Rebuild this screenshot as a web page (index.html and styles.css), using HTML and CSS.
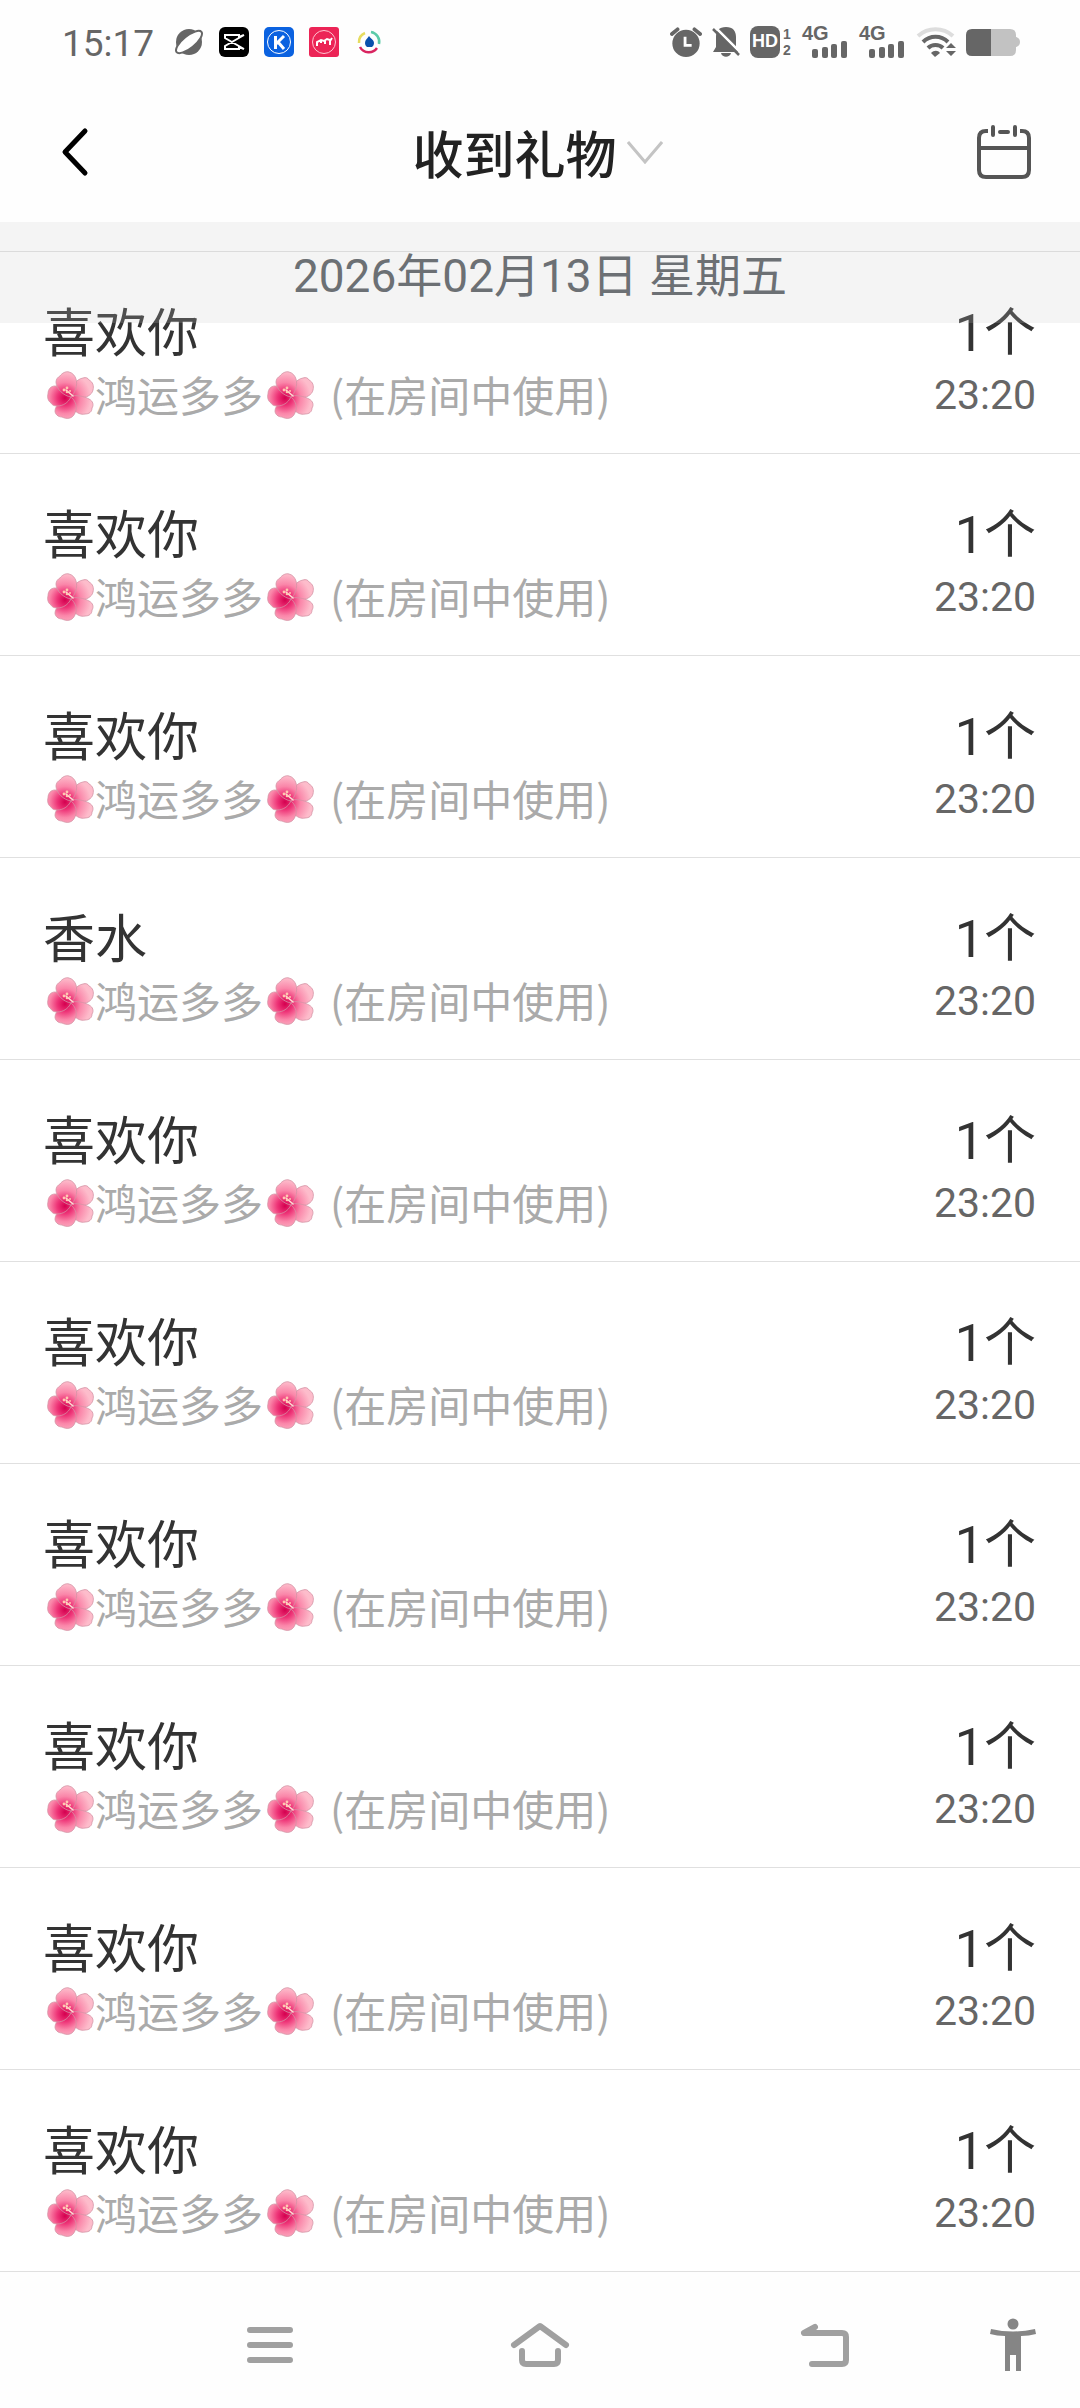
FILE: index.html
```html
<!DOCTYPE html>
<html lang="zh-CN">
<head>
    <meta charset="UTF-8">
    <meta name="viewport" content="width=device-width, initial-scale=1.0">
    <title>收到礼物</title>
    <link rel="stylesheet" href="styles.css">
</head>
<body>
    <svg class="defs" aria-hidden="true">
        <defs>
            <radialGradient id="petal" gradientUnits="userSpaceOnUse" cx="18" cy="27" r="26">
                <stop offset="0" stop-color="#d4004f"/>
                <stop offset="0.3" stop-color="#ee3578"/>
                <stop offset="0.6" stop-color="#fa86a9"/>
                <stop offset="1" stop-color="#fdbccb"/>
            </radialGradient>
            <symbol id="flower" viewBox="0 0 48 48">
                <g fill="url(#petal)" stroke="#d493a4" stroke-width="0.8">
                    <path d="M23 25C23 17 29 8 36 7c3-1 5 0 6 2 4 2 5 6 4 10-1 5-7 8-13 8-4 0-8 0-10-2z"/>
                    <path d="M23 25c6-1 14 0 19 3 4 2 5 6 3 9 0 4-3 6-7 6-4 1-8-1-11-4-4-4-5-9-4-14z"/>
                    <path d="M23 25c5 4 7 9 6 14-1 4-3 7-6 8-3 1-6 0-8-1-4 0-7-3-7-6 0-6 8-12 15-15z"/>
                    <path d="M24 26c-3 6-8 9-14 9-3 0-5-1-6-3-3-2-4-6-3-9 0-5 3-8 7-8 7 0 13 5 16 11z"/>
                    <path d="M24 26C17 25 9 18 9 11c0-3 2-5 4-6 2-3 6-5 9-4 4 1 6 4 7 7 2 6-1 14-5 18z"/>
                </g>
                <path d="M26 25l-7-6" stroke="#ffdcd4" stroke-width="1.6" stroke-linecap="round"/>
                <g fill="#ffc7b0">
                    <circle cx="17" cy="19" r="1.4"/>
                    <circle cx="20" cy="17" r="1.4"/>
                    <circle cx="20" cy="21" r="1.3"/>
                    <circle cx="23" cy="20" r="1"/>
                </g>
            </symbol>
        </defs>
    </svg>

    <div class="app">
        <div class="status-bar">
            <div class="status-left">
                <span class="clock">15:17</span>
                <svg width="30" height="30" viewBox="0 0 30 30">
                    <circle cx="15" cy="15" r="13" fill="#666"/>
                    <ellipse cx="15" cy="15" rx="16" ry="6" transform="rotate(-39 15 15)" fill="#fff" stroke="#666" stroke-width="2"/>
                </svg>
                <svg width="30" height="30" viewBox="0 0 30 30">
                    <rect width="30" height="30" rx="6" fill="#000"/>
                    <path d="M25 8L20 10V8H6v3l19 11M25 8L6 19v3h14v-2l5 2" fill="none" stroke="#fff" stroke-width="2"/>
                </svg>
                <svg width="30" height="30" viewBox="0 0 30 30">
                    <rect width="30" height="30" rx="5" fill="#0b62e0"/>
                    <circle cx="15" cy="15" r="11.5" fill="none" stroke="#fff"/>
                    <path d="M11.500 9v13M20 9l-8 8M14 15l6 7" fill="none" stroke="#fff" stroke-width="3"/>
                </svg>
                <svg width="30" height="30" viewBox="0 0 30 30">
                    <rect width="30" height="30" rx="3" fill="#ec2456"/>
                    <circle cx="15" cy="15" r="11.500" fill="none" stroke="#ffc4d0"/>
                    <path d="M8 19v-4l4-2 3 1 3-2 3 1v5M12 14v2M16 14v3M21 14l2-3" fill="none" stroke="#fff" stroke-width="2"/>
                </svg>
                <svg width="30" height="30" viewBox="0 0 30 30" fill="none" stroke-width="2.500">
                    <path d="M5 16a10 10 0 0 1 6-10" stroke="#e6dc60"/>
                    <path d="M17 5a10 10 0 0 1 8 12" stroke="#5ccba8"/>
                    <path d="M6 20a10 10 0 0 0 17 1" stroke="#d92560"/>
                    <path d="M15 9c-2 3-4 4-4 7 0 2 1 3 2 4h5c1-1 2-2 2-4 0-3-3-4-5-7z" fill="#0a51ad"/>
                </svg>
            </div>
            <div class="status-right">
                <svg width="32" height="31" viewBox="0 0 34 32">
                    <circle cx="17" cy="17" r="14.500" fill="#666"/>
                    <path d="M2 7l6-5M32 7l-6-5" stroke="#666" stroke-width="4" stroke-linecap="round"/>
                    <path d="M16 10v9h7" fill="none" stroke="#fff" stroke-width="3"/>
                </svg>
                <svg width="28" height="32" viewBox="0 0 28 32">
                    <path d="M14 1c7 0 10 4 10 10v10l3 5H1l3-5V11C4 5 7 1 14 1zM9 27h10c-1 5-9 5-10 0z" fill="#666"/>
                    <path d="M2 0l26 26" stroke="#fff" stroke-width="2.500"/>
                    <path d="M1 3l26 26" stroke="#666" stroke-width="2.500"/>
                </svg>
                <div class="hd">
                    <span class="hd-box">HD</span>
                    <span class="hd-sims"><span>1</span><span>2</span></span>
                </div>
                <div class="signal">
                    <span>4G</span>
                    <svg width="36" height="17" viewBox="0 0 36 17" fill="#666">
                        <rect x="0" y="8" width="6" height="9" rx="2"/>
                        <rect x="10" y="6" width="6" height="11" rx="2"/>
                        <rect x="19" y="3" width="6" height="14" rx="2"/>
                        <rect x="29" y="0" width="6" height="17" rx="2"/>
                    </svg>
                </div>
                <div class="signal">
                    <span>4G</span>
                    <svg width="36" height="17" viewBox="0 0 36 17" fill="#666">
                        <rect x="0" y="8" width="6" height="9" rx="2"/>
                        <rect x="10" y="6" width="6" height="11" rx="2"/>
                        <rect x="19" y="3" width="6" height="14" rx="2"/>
                        <rect x="29" y="0" width="6" height="17" rx="2"/>
                    </svg>
                </div>
                <svg width="40" height="30" viewBox="0 0 40 30" fill="none" stroke-width="4">
                    <path d="M2 9c10-9 25-9 35 0" stroke="#ddd"/>
                    <path d="M7 15c7-7 18-7 25 0M12 21c4-4 11-4 15 0" stroke="#666"/>
                    <path d="M15 26c3-3 7-3 9 0l-5 4zM30 21l5-5 5 5zM30 24h10l-5 5z" fill="#666"/>
                </svg>
                <svg width="54" height="27" viewBox="0 0 54 27">
                    <path d="M25 0h19q6 0 6 6v2q4 1 4 5t-4 5v3q0 6-6 6H25z" fill="#c2c2c2"/>
                    <path d="M6 0h19v27H6q-6 0-6-6V6q0-6 6-6z" fill="#666"/>
                </svg>
            </div>
        </div>

        <header class="header">
            <button class="back" aria-label="返回">
                <svg width="28" height="50" viewBox="0 0 28 50" fill="none" stroke="#000" stroke-width="5" stroke-linecap="round" stroke-linejoin="round">
                    <path d="M24 4L4 25l20 21"/>
                </svg>
            </button>
            <button class="title">
                收到礼物
                <svg width="36" height="24" viewBox="0 0 36 24" fill="none" stroke="#c4c4c4" stroke-width="3">
                    <path d="M1 2l17 20L35 2"/>
                </svg>
            </button>
            <button aria-label="选择日期">
                <svg width="56" height="54" viewBox="0 0 56 54" fill="none" stroke="#555" stroke-width="4">
                    <path d="M12 6h-2q-7 0-7 7v32q0 7 7 7h36q7 0 7-7V13q0-7-7-7h-2M3 23h50"/>
                    <path d="M24 7h8M17 2v8M39 2v8" stroke-linecap="round"/>
                </svg>
            </button>
        </header>

        <main class="gifts">
            <h2 class="date">2026年02月13日 星期五</h2>
            <ul class="gift-list" id="gift-list"></ul>
        </main>

        <nav class="nav-bar">
            <button aria-label="最近任务">
                <svg width="46" height="40" viewBox="0 0 46 40" stroke="#a0a0a0" stroke-width="6" stroke-linecap="round">
                    <path d="M3 5h40M3 20h40M3 35h40"/>
                </svg>
            </button>
            <button aria-label="主页">
                <svg width="60" height="46" viewBox="0 0 60 46" fill="none" stroke="#a0a0a0" stroke-width="6" stroke-linecap="round" stroke-linejoin="round">
                    <path d="M4 23L30 4l26 19M12 29v9q0 4 4 4h28q4 0 4-4v-9"/>
                </svg>
            </button>
            <button aria-label="返回上一级">
                <svg width="50" height="46" viewBox="0 0 50 46" fill="none" stroke="#a0a0a0" stroke-width="6" stroke-linecap="round" stroke-linejoin="round">
                    <path d="M15 5L4 11h38q4 0 4 4v23q0 4-4 4H12"/>
                </svg>
            </button>
            <button aria-label="无障碍">
                <svg width="48" height="54" viewBox="0 0 48 54" fill="#858585">
                    <circle cx="24" cy="6" r="5.500"/>
                    <path d="M2 11q22 5 44 0l1 5q-7 2-15 2v35h-5V37h-6v16h-5V18Q8 18 1 16z"/>
                </svg>
            </button>
        </nav>
    </div>

    <script>
        const gifts = ['喜欢你', '喜欢你', '喜欢你', '香水', '喜欢你', '喜欢你', '喜欢你', '喜欢你', '喜欢你', '喜欢你'];
        const flower = '<svg class="flower" role="img" aria-label="花"><use href="#flower"/></svg>';

        document.getElementById('gift-list').innerHTML = gifts.map(name => `
            <li class="gift">
                <div class="gift-info">
                    <span class="gift-name">${name}</span>
                    <span class="gift-from">${flower}鸿运多多${flower}<span class="gift-place">(在房间中使用)</span></span>
                </div>
                <div class="gift-meta">
                    <span class="gift-count">1个</span>
                    <time class="gift-time">23:20</time>
                </div>
            </li>`).join('');
    </script>
</body>
</html>
```
FILE: styles.css
```css
* {
    box-sizing: border-box;
}
body {
    margin: 0;
    background: #fefefe;
    color: #333;
    font-family: "Noto Sans CJK SC", sans-serif;
}
button {
    border: none;
    background: none;
    padding: 0;
    font: inherit;
    color: inherit;
    cursor: pointer;
}
svg {
    display: block;
    flex-shrink: 0;
}
.defs {
    position: absolute;
    width: 0;
    height: 0;
}
.app {
    display: flex;
    flex-direction: column;
    min-height: 100vh;
}
.clock,
.date,
.gift-count,
.gift-time {
    font-family: Roboto, "Noto Sans CJK SC", sans-serif;
}

/* status bar */
.status-bar {
    display: flex;
    justify-content: space-between;
    align-items: center;
    height: 84px;
    padding: 0 60px 0 62px;
    color: #666;
}
.status-left {
    display: flex;
    align-items: center;
    gap: 15px;
}
.clock {
    width: 97px;
    padding-top: 4px;
    font-size: 37px;
    line-height: 40px;
}
.status-right {
    display: flex;
    align-items: center;
    gap: 10px;
}
.hd {
    display: flex;
    gap: 3px;
}
.hd-box {
    width: 30px;
    border-radius: 8px;
    background: #666;
    color: #fff;
    font: bold 18px/30px "Liberation Sans", sans-serif;
    text-align: center;
}
.hd-sims {
    display: flex;
    flex-direction: column;
    width: 9px;
    font: bold 14px/16px "Liberation Sans", sans-serif;
}
.signal {
    display: flex;
    flex-direction: column;
    width: 47px;
    height: 32px;
}
.signal span {
    font: bold 20px/15px "Liberation Sans", sans-serif;
}
.signal svg {
    margin-left: 10px;
}

/* header */
.header {
    display: flex;
    justify-content: space-between;
    align-items: center;
    height: 138px;
    padding: 0 48px 2px 61px;
}
.back {
    width: 38px;
}
.title {
    display: flex;
    align-items: center;
    gap: 10px;
    color: #222;
    font-size: 51px;
    font-weight: 500;
    line-height: 64px;
}

/* gift list, scrolled partly under the translucent date */
.gifts {
    position: relative;
    flex: 1;
    padding-top: 29px;
    background: #fff;
}
.date {
    position: absolute;
    top: 0;
    left: 0;
    right: 0;
    height: 101px;
    margin: 0;
    background: rgba(200, 200, 200, 0.2);
    color: #6c7074;
    font-size: 46px;
    font-weight: 400;
    line-height: 108px;
    text-align: center;
}
.gift-list {
    margin: 0;
    padding: 0;
    border-top: 1px solid #e0e0e0;
    list-style: none;
}
.gift {
    display: flex;
    justify-content: space-between;
    height: 202px;
    padding: 47px 44px 0 43px;
    border-bottom: 1px solid #e0e0e0;
}
.gift-info,
.gift-meta {
    display: flex;
    flex-direction: column;
}
.gift-meta {
    align-items: flex-end;
    padding-top: 4px;
}
.gift-name,
.gift-count {
    font-size: 52px;
    line-height: 62px;
}
.gift-from {
    display: flex;
    align-items: center;
    color: #aaa;
    font-size: 42px;
    line-height: 66px;
}
.flower {
    width: 48px;
    height: 48px;
    margin: 2px 0 0 4px;
}
.gift-place {
    margin-left: 15px;
}
.gift-time {
    color: #666;
    font-size: 41px;
    line-height: 60px;
}

/* navigation bar */
.nav-bar {
    display: grid;
    grid-template-columns: 270fr 270fr 300fr 75fr;
    height: 136px;
    padding: 10px 30px 0 135px;
}
.nav-bar button {
    display: flex;
    justify-content: center;
    align-items: center;
}
```
